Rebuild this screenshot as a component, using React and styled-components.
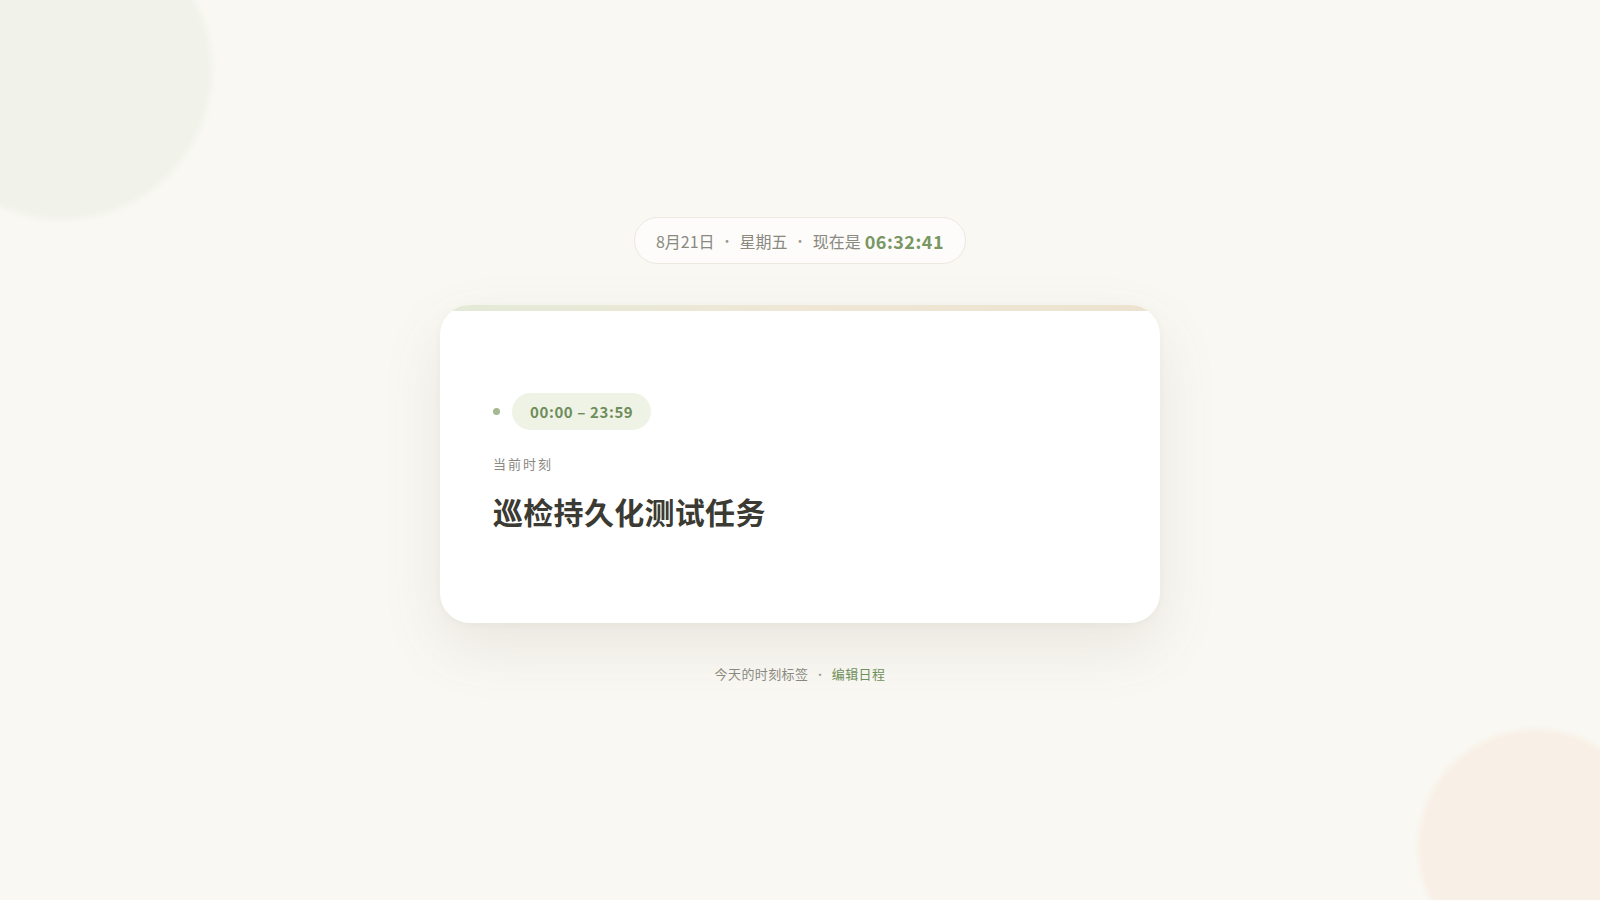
import React from "react";
import styled, { createGlobalStyle } from "styled-components";

const Global = createGlobalStyle`
  html, body { margin: 0; padding: 0; }
  body {
    background: #f9f8f3;
    font-family: "Noto Sans CJK SC", "Noto Sans", sans-serif;
  }
`;

const Page = styled.div`
  position: relative;
  width: 100%;
  height: 900px;
  overflow: hidden;
  background: #f9f8f3;
  display: flex;
  flex-direction: column;
  align-items: center;
  justify-content: center;
`;

const Blob = styled.div`
  position: absolute;
  border-radius: 50%;
  width: ${(p) => p.size}px;
  height: ${(p) => p.size}px;
  background: ${(p) => p.color};
  filter: blur(2px);
  ${(p) => p.pos}
`;

const Column = styled.main`
  position: relative;
  z-index: 1;
  display: flex;
  flex-direction: column;
  align-items: center;
`;

const DatePill = styled.div`
  height: 45px;
  padding: 0 21px;
  display: flex;
  align-items: center;
  background: #fdfcfa;
  border: 1px solid #ebe8df;
  border-radius: 999px;
  font-size: 16px;
  color: #8a897f;
`;

const Sep = styled.span`
  margin: 0 6px;
  font-size: 13px;
  color: #9a988e;
`;

const Clock = styled.span`
  margin-left: 4px;
  font-size: 18px;
  font-weight: 700;
  color: #789763;
  letter-spacing: 0.5px;
`;

const Card = styled.section`
  margin-top: 41px;
  width: 720px;
  background: #ffffff;
  border-radius: 30px;
  overflow: hidden;
  box-shadow: 0 24px 60px rgba(120, 110, 80, 0.12), 0 2px 6px rgba(120, 110, 80, 0.05);
`;

const Stripe = styled.div`
  height: 6px;
  background: linear-gradient(90deg, #e3ead7 0%, #efe6d6 50%, #ece2cf 100%);
`;

const CardBody = styled.div`
  padding: 82px 53px 92px;
  display: flex;
  flex-direction: column;
  align-items: flex-start;
`;

const TagRow = styled.div`
  display: flex;
  align-items: center;
  gap: 12px;
`;

const Dot = styled.span`
  width: 7px;
  height: 7px;
  border-radius: 50%;
  background: #a3b991;
`;

const TimeTag = styled.span`
  height: 37px;
  padding: 0 18px;
  display: inline-flex;
  align-items: center;
  border-radius: 999px;
  background: #eef3e6;
  color: #6f8d5b;
  font-size: 15px;
  font-weight: 700;
  letter-spacing: 0.6px;
`;

const Label = styled.div`
  margin-top: 24px;
  font-size: 13px;
  letter-spacing: 2px;
  color: #8a887f;
`;

const Title = styled.h1`
  margin: 18px 0 0;
  font-size: 30px;
  line-height: 40px;
  font-weight: 700;
  color: #3b3a33;
  letter-spacing: 0.3px;
`;

const Footer = styled.div`
  margin-top: 41px;
  font-size: 13px;
  letter-spacing: 0.4px;
  color: #8a897f;
  display: flex;
  align-items: center;
`;

const FootSep = styled.span`
  margin: 0 6px;
  font-size: 11px;
  color: #9a988e;
`;

const EditLink = styled.a`
  color: #6f8f5b;
  text-decoration: none;
  cursor: pointer;
`;

export default function App() {
  return (
    <>
      <Global />
      <Page>
        <Blob size={300} color="#f1f3eb" pos="left: -88px; top: -80px;" />
        <Blob size={236} color="#f8f0e6" pos="right: -54px; bottom: -65px;" />
        <Column>
          <DatePill>
            <span>8月21日</span>
            <Sep>•</Sep>
            <span>星期五</span>
            <Sep>•</Sep>
            <span>现在是</span>
            <Clock>06:32:41</Clock>
          </DatePill>
          <Card>
            <Stripe />
            <CardBody>
              <TagRow>
                <Dot />
                <TimeTag>00:00 – 23:59</TimeTag>
              </TagRow>
              <Label>当前时刻</Label>
              <Title>巡检持久化测试任务</Title>
            </CardBody>
          </Card>
          <Footer>
            <span>今天的时刻标签</span>
            <FootSep>•</FootSep>
            <EditLink>编辑日程</EditLink>
          </Footer>
        </Column>
      </Page>
    </>
  );
}
